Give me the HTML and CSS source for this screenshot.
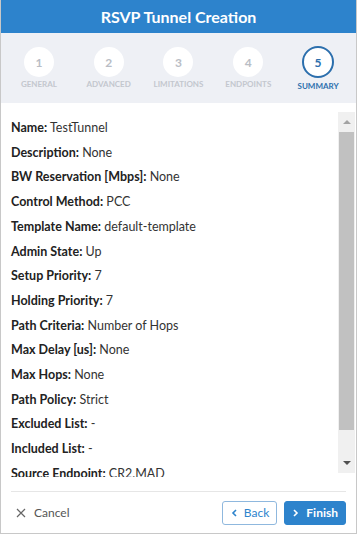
FILE: index.html
```html
<!DOCTYPE html>
<html>
<head>
    <title>RSVP Tunnel Creation</title>
    <meta charset="UTF-8">
    <link rel="stylesheet" href="styles.css">
</head>
<body>
<div class="dialog">
    <header>
        <h1>RSVP Tunnel Creation</h1>
    </header>

    <div class="steps">
        <div class="step">
            <div class="circle">1</div>
            <div class="label">General</div>
        </div>
        <div class="step">
            <div class="circle">2</div>
            <div class="label">Advanced</div>
        </div>
        <div class="step">
            <div class="circle">3</div>
            <div class="label">Limitations</div>
        </div>
        <div class="step">
            <div class="circle">4</div>
            <div class="label">Endpoints</div>
        </div>
        <div class="step active">
            <div class="circle">5</div>
            <div class="label">Summary</div>
        </div>
    </div>

    <div class="content">
        <div class="summary">
            <div class="row"><b>Name:</b> TestTunnel</div>
            <div class="row"><b>Description:</b> None</div>
            <div class="row"><b>BW Reservation [Mbps]:</b> None</div>
            <div class="row"><b>Control Method:</b> PCC</div>
            <div class="row"><b>Template Name:</b> default-template</div>
            <div class="row"><b>Admin State:</b> Up</div>
            <div class="row"><b>Setup Priority:</b> 7</div>
            <div class="row"><b>Holding Priority:</b> 7</div>
            <div class="row"><b>Path Criteria:</b> Number of Hops</div>
            <div class="row"><b>Max Delay [us]:</b> None</div>
            <div class="row"><b>Max Hops:</b> None</div>
            <div class="row"><b>Path Policy:</b> Strict</div>
            <div class="row"><b>Excluded List:</b> -</div>
            <div class="row"><b>Included List:</b> -</div>
            <div class="row"><b>Source Endpoint:</b> CR2.MAD</div>
        </div>
        <!-- fake scrollbar -->
        <div class="scrollbar">
            <div class="arrow up"></div>
            <div class="thumb"></div>
            <div class="track"></div>
            <div class="arrow down"></div>
        </div>
    </div>

    <footer>
        <div class="cancel">
            <svg width="10" height="10" viewBox="0 0 10 10"><path d="M1 1L9 9M9 1L1 9" stroke="#666" stroke-width="1.2" fill="none"/></svg>
            Cancel
        </div>
        <div class="buttons">
            <button class="btn back">
                <svg width="6" height="8" viewBox="0 0 6 8"><path d="M5 1L2 4L5 7" stroke="#2d83cc" stroke-width="1.6" fill="none"/></svg>
                Back
            </button>
            <button class="btn finish">
                <svg width="6" height="8" viewBox="0 0 6 8"><path d="M1 1L4 4L1 7" stroke="#fff" stroke-width="1.6" fill="none"/></svg>
                Finish
            </button>
        </div>
    </footer>
</div>
</body>
</html>
```

FILE: styles.css
```css
body {
    margin: 0;
    padding: 0;
    background: white;
    font-family: Lato, "Open Sans", sans-serif;
    color: #333;
}

.dialog {
    width: 357px;
    height: 534px;
    box-sizing: border-box;
    border: 1px solid #c8c8c8;
    border-top: none;
    display: flex;
    flex-direction: column;
    overflow: hidden;
}

header {
    background: #2d83cc;
    height: 33px;
    display: flex;
    align-items: center;
    justify-content: center;
}

h1 {
    margin: 0;
    color: white;
    font-size: 16px;
    font-weight: bold;
}

.steps {
    background: #eef0f5;
    height: 70px;
    display: flex;
    padding: 0 3px;
}

.step {
    flex: 1;
    display: flex;
    flex-direction: column;
    align-items: center;
    padding-top: 14px;
}

.circle {
    width: 30px;
    height: 30px;
    border-radius: 50%;
    background: white;
    color: #b9bdc5;
    font-size: 12px;
    font-weight: bold;
    display: flex;
    align-items: center;
    justify-content: center;
    box-sizing: border-box;
}

.label {
    margin-top: 2px;
    font-size: 8px;
    font-weight: bold;
    text-transform: uppercase;
    color: #c3c7ce;
}

.step.active .circle {
    border: 2px solid #2c6fad;
    color: #2c6fad;
    width: 32px;
    height: 32px;
    margin-top: -1px;
}

.step.active .label {
    color: #2c6fad;
    margin-top: 3px;
}

.content {
    flex: 1;
    display: flex;
    margin-right: 1px;
}

.summary {
    flex: 1;
    padding: 13px 10px 0 10px;
    font-size: 12.5px;
    line-height: 24.7px;
    height: 361px;
    overflow: hidden;
}

.row {
    white-space: nowrap;
    color: #333;
}

.row b {
    color: #222;
}

.scrollbar {
    width: 17px;
    margin-top: 9px;
    height: 361px;
    display: flex;
    flex-direction: column;
    background: #f0f0f0;
}

.arrow {
    height: 20px;
    display: flex;
    align-items: center;
    justify-content: center;
}

.arrow.up::after {
    content: "";
    border-left: 4px solid transparent;
    border-right: 4px solid transparent;
    border-bottom: 4px solid #a3a3a3;
}

.arrow.down::after {
    content: "";
    border-left: 4px solid transparent;
    border-right: 4px solid transparent;
    border-top: 4px solid #505050;
}

.thumb {
    height: 298px;
    background: #c1c1c1;
    margin: 0 1px;
}

.track {
    flex: 1;
}

footer {
    height: 41px;
    display: flex;
    align-items: center;
    justify-content: space-between;
    margin: 0 10px;
    padding-left: 5px;
    border-top: 1px solid #e6e6e6;
}

.cancel {
    font-size: 12px;
    color: #555;
    display: flex;
    align-items: center;
    gap: 8px;
}

.buttons {
    display: flex;
    gap: 7px;
}

.btn {
    height: 24px;
    border-radius: 3px;
    font-family: Lato, sans-serif;
    font-size: 12px;
    font-weight: bold;
    display: flex;
    align-items: center;
    gap: 7px;
    padding: 0 7px 0 8px;
    cursor: pointer;
}

.btn.back {
    background: white;
    border: 1px solid #8fb8de;
    color: #2d83cc;
    font-weight: normal;
}

.btn.finish {
    background: #2d83cc;
    border: 1px solid #2d83cc;
    color: white;
}
```
